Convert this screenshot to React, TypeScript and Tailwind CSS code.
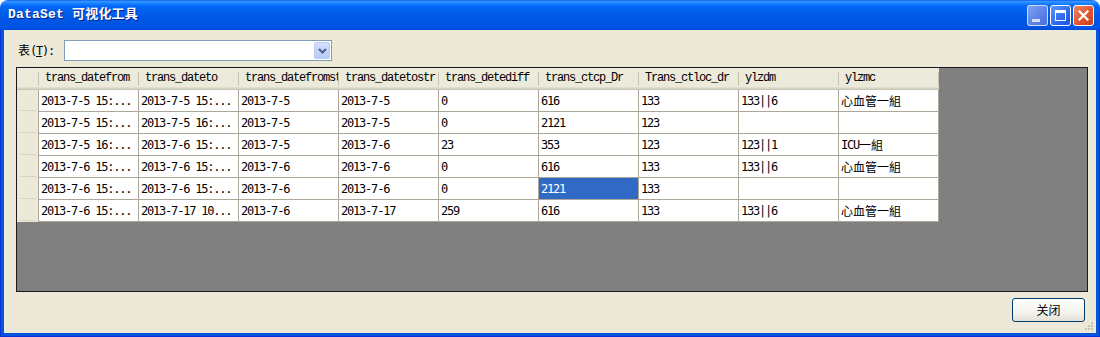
import React from 'react';

const headers = [
  'trans_datefrom',
  'trans_dateto',
  'trans_datefromstr',
  'trans_datetostr',
  'trans_detediff',
  'trans_ctcp_Dr',
  'Trans_ctloc_dr',
  'ylzdm',
  'ylzmc',
];

const rows: string[][] = [
  ['2013-7-5 15:...', '2013-7-5 15:...', '2013-7-5', '2013-7-5', '0', '616', '133', '133||6', '心血管一組'],
  ['2013-7-5 15:...', '2013-7-5 16:...', '2013-7-5', '2013-7-5', '0', '2121', '123', '', ''],
  ['2013-7-5 16:...', '2013-7-6 15:...', '2013-7-5', '2013-7-6', '23', '353', '123', '123||1', 'ICU一組'],
  ['2013-7-6 15:...', '2013-7-6 15:...', '2013-7-6', '2013-7-6', '0', '616', '133', '133||6', '心血管一組'],
  ['2013-7-6 15:...', '2013-7-6 15:...', '2013-7-6', '2013-7-6', '0', '2121', '133', '', ''],
  ['2013-7-6 15:...', '2013-7-17 10...', '2013-7-6', '2013-7-17', '259', '616', '133', '133||6', '心血管一組'],
];

// selected cell: row 4, col 5
const SEL_ROW = 4;
const SEL_COL = 5;

function Txt({ s }: { s: string }) {
  const parts = s.split(/([\u4e00-\u9fff]+)/);
  return (
    <>
      {parts.map((p, i) =>
        /[\u4e00-\u9fff]/.test(p) ? (
          <span key={i} className="font-['Noto_Sans_CJK_SC',sans-serif] tracking-normal">{p}</span>
        ) : (
          <span key={i}>{p}</span>
        )
      )}
    </>
  );
}

function TitleButtons() {
  return (
    <div className="flex gap-[2px] pr-[6px]">
      <div className="w-[21px] h-[21px] rounded-[3px] border border-white/70 bg-[linear-gradient(135deg,#7FA2F0,#5A81E6_60%,#4A70DE)] flex items-end pl-[4px] pb-[3px]">
        <div className="w-[8px] h-[3px] bg-[#D5DEF8]" />
      </div>
      <div className="w-[21px] h-[21px] rounded-[3px] border border-white bg-[linear-gradient(135deg,#5C95FA,#2E6BEB_60%,#1D56D9)] flex items-center justify-center">
        <div className="w-[11px] h-[11px] border border-white border-t-[3px]" />
      </div>
      <div className="w-[21px] h-[21px] rounded-[3px] border border-white bg-[linear-gradient(135deg,#EB8866,#E0542F_55%,#C9401C)] flex items-center justify-center">
        <svg width="11" height="11" viewBox="0 0 11 11">
          <path d="M1.5 1.5 L9.5 9.5 M9.5 1.5 L1.5 9.5" stroke="white" strokeWidth="2.2" strokeLinecap="square" />
        </svg>
      </div>
    </div>
  );
}

function Grid() {
  return (
    <div className="w-[1072px] h-[225px] border border-[#1a1a1a] bg-[#808080] overflow-hidden">
      <div className="flex h-[22px] w-[922px] bg-[#EBEADB] shadow-[inset_0_-1px_#CBC7B8,inset_0_-2px_#D6D2C2,inset_0_-3px_#E2DECD]">
        <div className="w-[22px] flex items-center justify-end">
          <div className="w-px h-[14px] bg-[#C7C5B2]" />
        </div>
        {headers.map(h => (
          <div key={h} className="w-[100px] flex items-center">
            <div className="flex-1 overflow-hidden whitespace-nowrap pl-[6px] pb-[2px] font-['Liberation_Mono',monospace] text-[12px] tracking-[-1.2px] text-black">
              {h}
            </div>
            <div className="w-px h-[14px] bg-[#C7C5B2]" />
          </div>
        ))}
      </div>
      {rows.map((r, ri) => (
        <div key={ri} className="flex h-[22px] w-[922px]">
          <div className="w-[22px] bg-[#ECE9D8] border-r border-[#ACA899] flex items-end justify-center">
            <div className="w-[16px] h-px bg-[#D8D4C4] mb-[1px]" />
          </div>
          {r.map((c, ci) => {
            const sel = ri === SEL_ROW && ci === SEL_COL;
            return (
              <div
                key={ci}
                className={`w-[100px] border-r border-b border-[#ACA899] flex items-center pl-[2px] overflow-hidden whitespace-nowrap font-['DejaVu_Sans_Mono',monospace] text-[12px] tracking-[-1.2px] ${
                  sel ? 'bg-[#316AC5] text-white' : 'bg-white text-black'
                }`}
              >
                <Txt s={c} />
              </div>
            );
          })}
        </div>
      ))}
    </div>
  );
}

export default function App() {
  return (
    <div className="w-[1100px] h-[337px] bg-white flex flex-col">
      <div className="h-[30px] rounded-t-[8px] flex items-center justify-between bg-[linear-gradient(to_bottom,#0058EE_0%,#3A93FF_4%,#288EFF_8%,#127DFF_13%,#0369FC_20%,#0262EE_30%,#0057E5_60%,#0054E3_85%,#0055EB_92%,#0046D2_100%)]">
        <div className="pl-[8px] pb-[1px] text-white font-bold text-[13px] tracking-[0.2px] font-['Liberation_Mono','Noto_Sans_CJK_SC',monospace] [text-shadow:1px_1px_0_#0A1E8C]">
          DataSet 可视化工具
        </div>
        <TitleButtons />
      </div>
      <div className="flex-1 bg-[#0855DD] px-[4px] pb-[4px] shadow-[inset_1px_0_#0831D9,inset_-1px_0_#0831D9,inset_0_-1px_#0831D9]">
        <div className="relative h-full bg-[#ECE9D8] pl-[12px] pr-[8px] pt-[10px] flex flex-col">
          <div className="flex h-[21px]">
            <div className="w-[48px] pl-[2px] pt-[1px] text-[12px] text-black font-['DejaVu_Sans_Mono','Noto_Sans_CJK_SC',monospace] tracking-[-1.2px]">
              <span className="font-['Noto_Sans_CJK_SC',sans-serif] tracking-normal">表</span>(<span className="underline">T</span>):
            </div>
            <div className="w-[268px] h-[21px] border border-[#7F9DB9] bg-white flex justify-end p-px">
              <div className="w-[16px] h-[17px] rounded-[2px] border border-[#B9CBF3] bg-[linear-gradient(to_bottom,#D3E0FD,#B7CBF8)] flex items-center justify-center">
                <svg width="9" height="6" viewBox="0 0 9 6">
                  <path d="M1 1 L4.5 4.5 L8 1" stroke="#4D6185" strokeWidth="2" fill="none" />
                </svg>
              </div>
            </div>
          </div>
          <div className="mt-[6px]">
            <Grid />
          </div>
          <div className="mt-[6px] flex justify-end pr-[3px]">
            <div className="w-[73px] h-[24px] rounded-[3px] border border-[#003C74] bg-[linear-gradient(to_bottom,#FFFFFF,#F4F3EE_60%,#E3E1D6)] flex items-center justify-center text-[12px] text-black font-['Noto_Sans_CJK_SC',sans-serif]">
              关闭
            </div>
          </div>
          <svg className="absolute right-[2px] bottom-[2px]" width="10" height="10" viewBox="0 0 10 10">
            <rect x="7" y="1" width="2" height="2" fill="#C5C2B2" />
            <rect x="4" y="4" width="2" height="2" fill="#C5C2B2" />
            <rect x="7" y="4" width="2" height="2" fill="#C5C2B2" />
            <rect x="1" y="7" width="2" height="2" fill="#C5C2B2" />
            <rect x="4" y="7" width="2" height="2" fill="#C5C2B2" />
            <rect x="7" y="7" width="2" height="2" fill="#C5C2B2" />
          </svg>
        </div>
      </div>
    </div>
  );
}
